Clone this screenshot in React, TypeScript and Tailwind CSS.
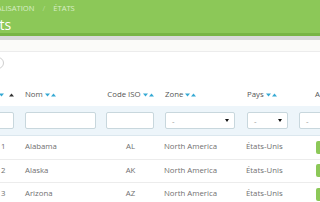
import React from "react";

const Down = ({ c = "#35a9d4" }: { c?: string }) => (
  <svg width="5" height="4" viewBox="0 0 5 4" className="block"><path d="M0 0.5h5L2.5 3.5z" fill={c} /></svg>
);
const Up = ({ c = "#35a9d4" }: { c?: string }) => (
  <svg width="5" height="4" viewBox="0 0 5 4" className="block"><path d="M0 3.5h5L2.5 0.5z" fill={c} /></svg>
);
const Sort = ({ upDark = false }: { upDark?: boolean }) => (
  <span className="inline-flex items-center gap-[1px] ml-[2px]">
    <Down />
    <Up c={upDark ? "#333333" : "#35a9d4"} />
  </span>
);

const Input = () => <div className="h-[17px] w-full bg-white border border-[#c8d7dd] rounded-[2px]" />;
const Select = () => (
  <div className="h-[17px] w-full bg-white border border-[#c8d7dd] rounded-[2px] flex items-center justify-between pl-[6px] pr-[5px] text-[#999] text-[8px]">
    <span>-</span>
    <svg width="4" height="3" viewBox="0 0 4 3"><path d="M0 0h4L2 3z" fill="#111" /></svg>
  </div>
);

const rows = [
  ["1", "Alabama", "AL"],
  ["2", "Alaska", "AK"],
  ["3", "Arizona", "AZ"],
];

export default function App() {
  const cols = "grid grid-cols-[50px_81px_59px_81px_53px_60px] ml-[-30px] w-[384px]";
  return (
    <div className="w-[320px] h-[202px] overflow-hidden bg-white font-['Open_Sans',sans-serif]">
      <div className="h-[33px] bg-[#8cc858]">
        <div className="ml-[-18px] pt-[4px] flex gap-[8px] text-[7.6px] leading-[9px] uppercase text-[#d9eec8]">
          <span>Localisation</span>
          <span className="text-[#b5dc94]">/</span>
          <span>États</span>
        </div>
        <div className="ml-[-21px] mt-[4px] text-[14px] leading-[15px] text-white">États</div>
      </div>
      <div className="h-[3px] bg-[#78b545]" />
      <div className="h-[4px] bg-[#d9dada]" />
      <div className="h-[11px] bg-[#fbfbf9]" />
      <div className="h-px bg-[#ececec]" />
      <div className="h-[32px] pt-[5px] pl-0">
        <div className="ml-[-8px] w-[12px] h-[12px] rounded-full border border-[#cfcfcf]" />
      </div>
      <div className="text-[7.8px] text-[#555]">
        <div className={`${cols} h-[22px] items-center`}>
          <div className="flex justify-end pr-[6px]">
            <span className="inline-flex items-center gap-[5px]"><Down /><Up c="#333" /></span>
          </div>
          <div className="pl-[5px] flex items-center">Nom<Sort /></div>
          <div className="flex items-center justify-center">Code ISO<Sort /></div>
          <div className="pl-[5px] flex items-center">Zone<Sort /></div>
          <div className="pl-[6px] flex items-center">Pays<Sort /></div>
          <div className="pl-[21px] flex items-center">Actif</div>
        </div>
        <div className={`${cols} h-[30px] items-center bg-[#edf5fa] border-b border-[#dbe7ee]`}>
          <div className="pl-[5px] pr-[6px]"><Input /></div>
          <div className="pl-[5px] pr-[5px]"><Input /></div>
          <div className="pl-[5px] pr-[6px]"><Input /></div>
          <div className="pl-[5px] pr-[6px]"><Select /></div>
          <div className="pl-[6px] pr-[6px]"><Select /></div>
          <div className="pl-[5px] pr-[6px]"><Select /></div>
        </div>
        {rows.map(([id, name, iso]) => (
          <div key={id} className={`${cols} h-[23.5px] items-center border-b border-[#ececec] text-[#707070]`}>
            <div className="pl-[31px]">{id}</div>
            <div className="pl-[5px]">{name}</div>
            <div className="text-center">{iso}</div>
            <div className="pl-[4px]">North America</div>
            <div className="pl-[5px]">États-Unis</div>
            <div className="pl-[22px]"><div className="w-[14px] h-[13px] rounded-[2px] bg-[#8cc858]" /></div>
          </div>
        ))}
      </div>
    </div>
  );
}
